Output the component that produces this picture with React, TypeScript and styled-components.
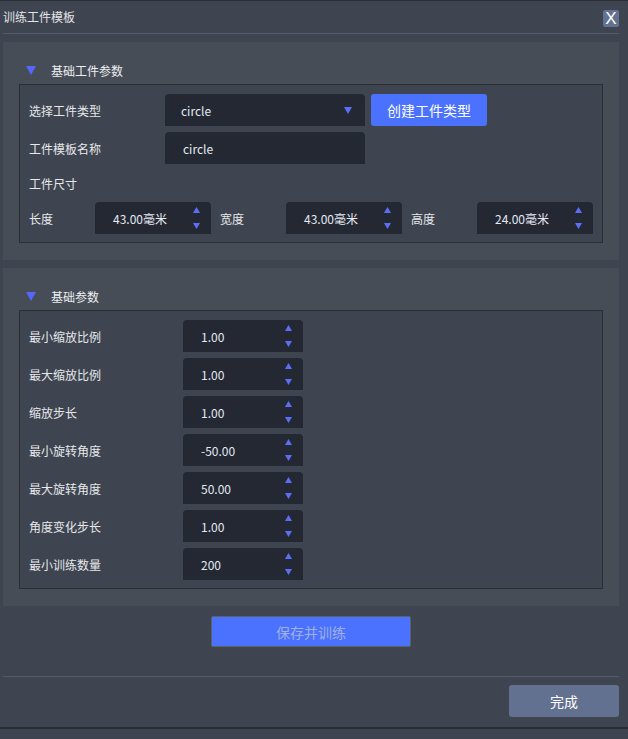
import React from 'react';
import styled, { createGlobalStyle } from 'styled-components';

const GlobalStyle = createGlobalStyle`
  html, body {
    margin: 0;
    padding: 0;
    background: #3f4550;
  }
  body {
    font-family: "Noto Sans CJK SC", "Noto Sans", sans-serif;
    color: #e4e6ea;
  }
  * { box-sizing: border-box; }
`;

const Page = styled.div`
  width: 628px;
  height: 739px;
  background: #3f4550;
  overflow: hidden;
`;

const Dialog = styled.div`
  height: 729px;
  display: flex;
  flex-direction: column;
  border-top: 1px solid #2b2e34;
  border-bottom: 2px solid #2a2c30;
  padding: 0 9px 0 3px;
`;

const TitleBar = styled.div`
  height: 32px;
  display: flex;
  align-items: center;
  justify-content: space-between;
`;

const Title = styled.div`
  font-size: 12px;
  line-height: 14px;
  color: #e2e4e8;
`;

const CloseButton = styled.button`
  width: 16px;
  height: 17px;
  margin-top: 3px;
  padding: 0;
  border: none;
  border-radius: 2px;
  background: #62718f;
  color: #ffffff;
  font-family: "Liberation Sans", sans-serif;
  font-size: 17px;
  line-height: 17px;
  text-align: center;
`;

const Divider = styled.div`
  height: 1px;
  background: #555c67;
`;

const Section = styled.section<{ $top: number }>`
  margin-top: ${(p) => p.$top}px;
  background: #474d57;
  padding: 18px 16px 17px 16px;
`;

const SectionHeader = styled.div`
  height: 20px;
  display: flex;
  align-items: center;
  margin-bottom: 4px;
  font-size: 12px;
  color: #eceef2;
`;

const Caret = styled.svg`
  margin-left: 7px;
  margin-right: 15px;
`;

const Box = styled.div`
  border: 1px solid #2b2e34;
  background: #3f4550;
  padding: 9px 9px 8px 9px;
  display: flex;
  flex-direction: column;
  gap: 6px;
`;

const Row = styled.div<{ $h?: number }>`
  height: ${(p) => p.$h ?? 32}px;
  display: flex;
  align-items: center;
`;

const Label = styled.div<{ $w: number }>`
  width: ${(p) => p.$w}px;
  flex-shrink: 0;
  font-size: 12px;
  color: #e6e8ec;
`;

const Field = styled.div<{ $w: number; $pad?: number }>`
  position: relative;
  width: ${(p) => p.$w}px;
  height: 32px;
  flex-shrink: 0;
  background: #232833;
  border-radius: 4px 4px 0 0;
  padding-left: ${(p) => p.$pad ?? 18}px;
  display: flex;
  align-items: center;
  font-size: 12px;
  color: #e4e9f2;
`;

const SpinArrows = styled.div`
  position: absolute;
  right: 11px;
  top: 5px;
  bottom: 5px;
  display: flex;
  flex-direction: column;
  justify-content: space-between;
`;

const DropArrow = styled.svg`
  position: absolute;
  right: 13px;
  top: 13px;
`;

const BlueButton = styled.button`
  margin-left: 6px;
  width: 116px;
  height: 32px;
  border: none;
  border-radius: 3px;
  background: #4b72fe;
  color: #ffffff;
  font-family: inherit;
  font-size: 14px;
`;

const Gap = styled.div<{ $w: number }>`
  width: ${(p) => p.$w}px;
  flex-shrink: 0;
`;

const SaveWrap = styled.div`
  display: flex;
  justify-content: center;
  margin-top: 10px;
  margin-bottom: 29px;
`;

const SaveButton = styled.button`
  width: 200px;
  height: 31px;
  border: 1px solid #5b6069;
  border-radius: 2px;
  background: #4b72fe;
  color: #9fb0e6;
  font-family: inherit;
  font-size: 14px;
`;

const Footer = styled.div`
  display: flex;
  justify-content: flex-end;
  padding-top: 8px;
`;

const DoneButton = styled.button`
  width: 110px;
  height: 32px;
  border: none;
  border-radius: 3px;
  background: #62718f;
  color: #ffffff;
  font-family: inherit;
  font-size: 14px;
`;

const Tri = ({ down, w = 7, h = 6 }: { down?: boolean; w?: number; h?: number }) => (
  <svg width={w} height={h} viewBox={`0 0 ${w} ${h}`}>
    <polygon
      points={down ? `0,0 ${w},0 ${w / 2},${h}` : `${w / 2},0 ${w},${h} 0,${h}`}
      fill="#5b6ff6"
    />
  </svg>
);

const Spin = ({ value, width }: { value: string; width: number }) => (
  <Field $w={width}>
    {value}
    <SpinArrows>
      <Tri />
      <Tri down />
    </SpinArrows>
  </Field>
);

const Header = ({ text }: { text: string }) => (
  <SectionHeader>
    <Caret width="10" height="9" viewBox="0 0 10 9">
      <polygon points="0,0 10,0 5,9" fill="#5566f8" />
    </Caret>
    {text}
  </SectionHeader>
);

const params = [
  ['最小缩放比例', '1.00'],
  ['最大缩放比例', '1.00'],
  ['缩放步长', '1.00'],
  ['最小旋转角度', '-50.00'],
  ['最大旋转角度', '50.00'],
  ['角度变化步长', '1.00'],
  ['最小训练数量', '200'],
];

export default function App() {
  return (
    <Page>
      <GlobalStyle />
      <Dialog>
        <TitleBar>
          <Title>训练工件模板</Title>
          <CloseButton>X</CloseButton>
        </TitleBar>
        <Divider />

        <Section $top={8}>
          <Header text="基础工件参数" />
          <Box>
            <Row>
              <Label $w={136}>选择工件类型</Label>
              <Field $w={200} $pad={16}>
                circle
                <DropArrow width="8" height="7" viewBox="0 0 8 7">
                  <polygon points="0,0 8,0 4,7" fill="#5b6ff6" />
                </DropArrow>
              </Field>
              <BlueButton>创建工件类型</BlueButton>
            </Row>
            <Row>
              <Label $w={136}>工件模板名称</Label>
              <Field $w={200}>circle</Field>
            </Row>
            <Row $h={26}>
              <Label $w={136}>工件尺寸</Label>
            </Row>
            <Row>
              <Label $w={66}>长度</Label>
              <Spin value="43.00毫米" width={116} />
              <Gap $w={9} />
              <Label $w={66}>宽度</Label>
              <Spin value="43.00毫米" width={116} />
              <Gap $w={9} />
              <Label $w={66}>高度</Label>
              <Spin value="24.00毫米" width={116} />
            </Row>
          </Box>
        </Section>

        <Section $top={8}>
          <Header text="基础参数" />
          <Box>
            {params.map(([label, value]) => (
              <Row key={label}>
                <Label $w={154}>{label}</Label>
                <Spin value={value} width={120} />
              </Row>
            ))}
          </Box>
        </Section>

        <SaveWrap>
          <SaveButton>保存并训练</SaveButton>
        </SaveWrap>
        <Divider />
        <Footer>
          <DoneButton>完成</DoneButton>
        </Footer>
      </Dialog>
    </Page>
  );
}
